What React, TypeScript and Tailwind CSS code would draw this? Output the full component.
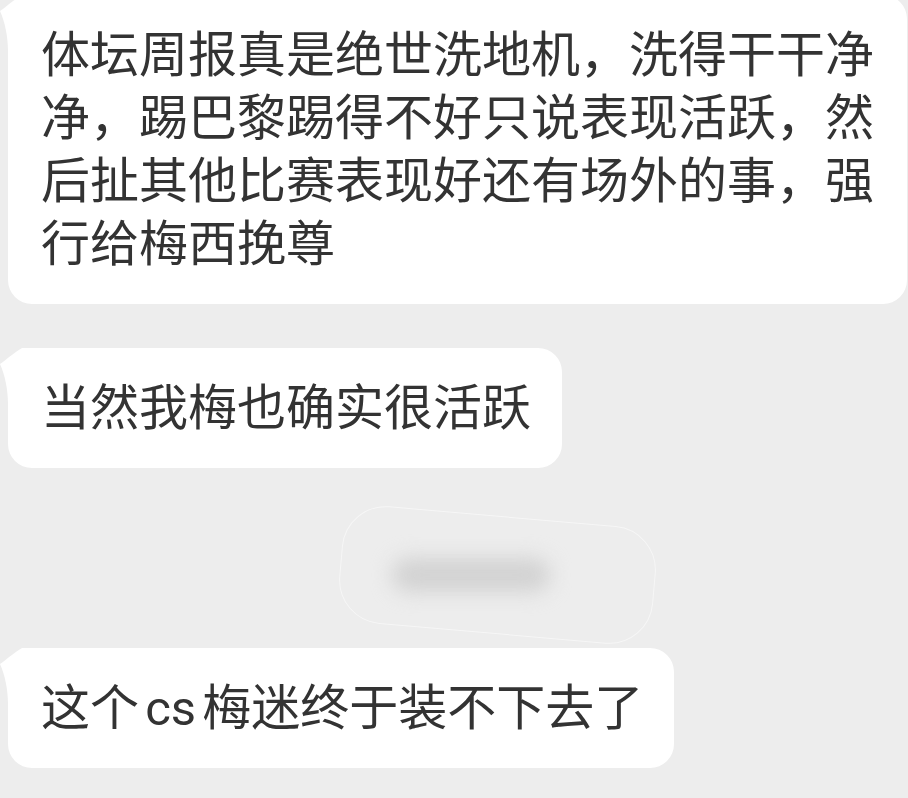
import React from "react";

function Tail() {
  return (
    <svg
      className="absolute left-[-8px] top-0"
      width="32"
      height="56"
      viewBox="0 0 32 56"
    >
      <path d="M0 16 C 6 12 12 6 22 0 L 32 0 L 32 56 L 8 56 C 8 42 5 27 0 16 Z" fill="#ffffff" />
    </svg>
  );
}

function Bubble({ children, className = "" }: { children: React.ReactNode; className?: string }) {
  return (
    <div
      className={`relative ml-[8px] bg-white rounded-[24px] pl-[33px] pr-[31px] pt-[29px] pb-[28px] text-[49px] leading-[63px] text-[#333333] ${className}`}
    >
      <Tail />
      <div className="relative">{children}</div>
    </div>
  );
}

export default function App() {
  return (
    <div
      className="w-[908px] h-[798px] bg-[#ededed] overflow-hidden flex flex-col items-start"
      style={{ fontFamily: 'Roboto, "Noto Sans CJK SC", sans-serif' }}
    >
      <Bubble className="mt-[-5px] w-[899px]">
        体坛周报真是绝世洗地机，洗得干干净净，踢巴黎踢得不好只说表现活跃，然后扯其他比赛表现好还有场外的事，强行给梅西挽尊
      </Bubble>
      <Bubble className="mt-[44px]">当然我梅也确实很活跃</Bubble>
      <div className="relative w-full h-[180px]">
        <div className="absolute left-[340px] top-[48px] w-[315px] h-[118px] rounded-[44px] border border-white/50 rotate-[5deg]" />
        <div className="absolute left-[392px] top-[90px] w-[158px] h-[34px] rounded-full bg-[#d2d2d2] blur-[10px]" />
      </div>
      <Bubble className="[word-spacing:-6px]">这个 cs 梅迷终于装不下去了</Bubble>
    </div>
  );
}
